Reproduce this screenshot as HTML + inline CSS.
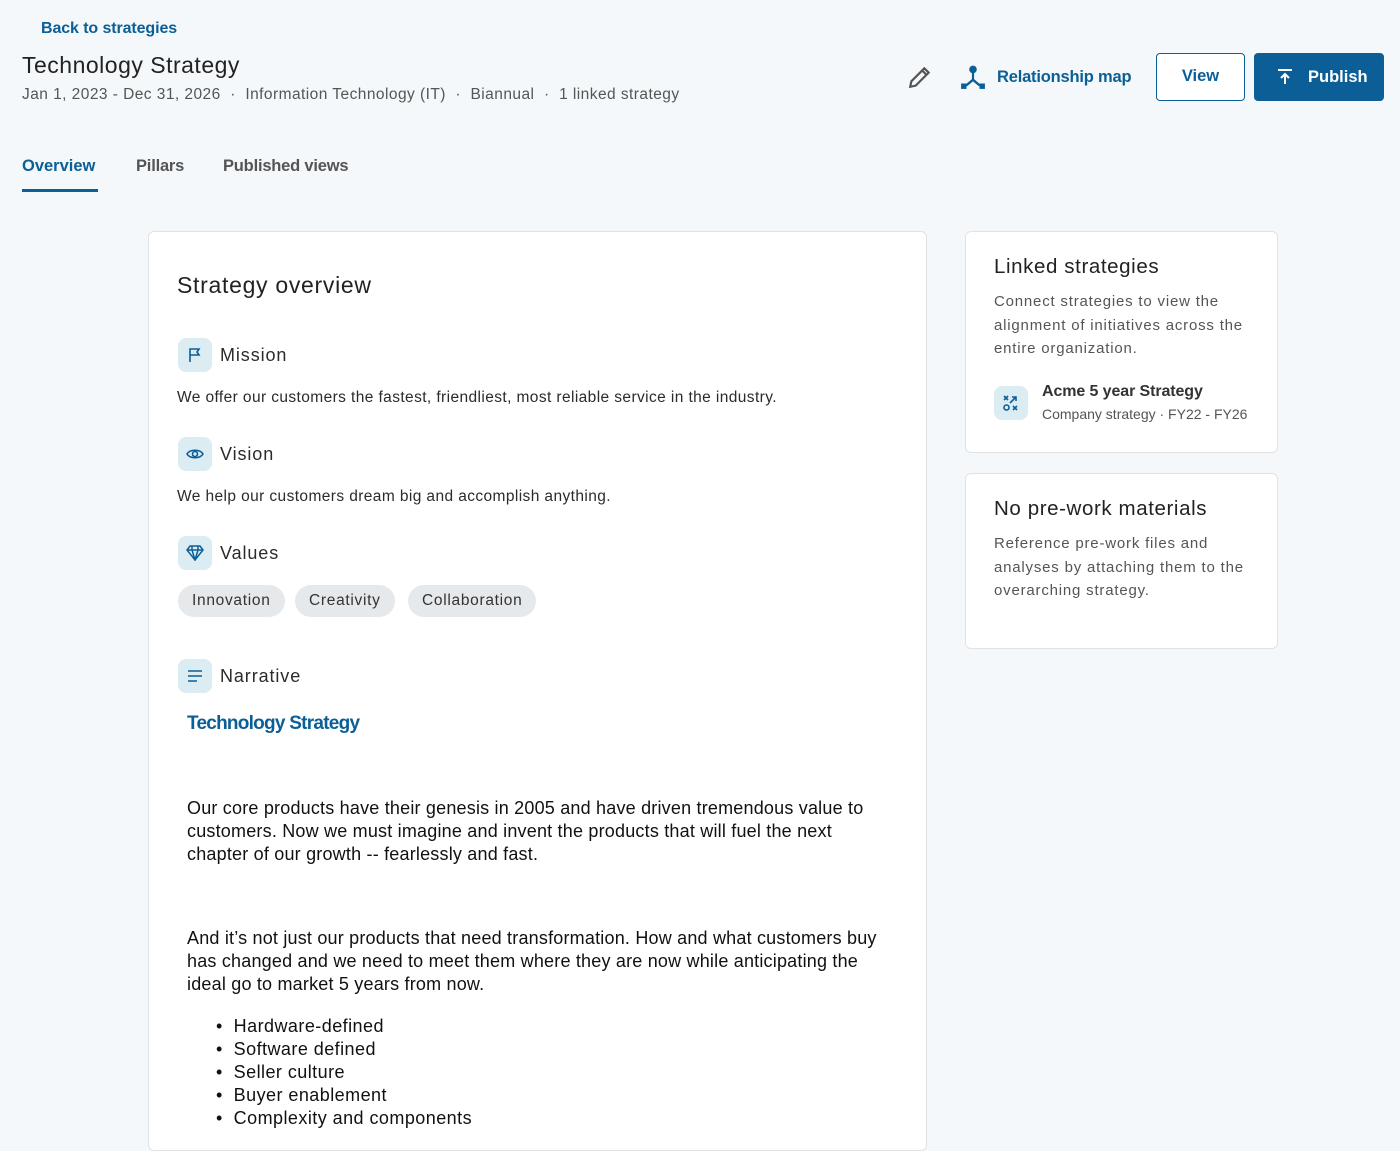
<!DOCTYPE html>
<html><head><meta charset="utf-8"><style>
*{box-sizing:border-box;margin:0;padding:0}
body{width:1400px;height:1120px;overflow:hidden;background:#f4f8fa;font-family:"Liberation Sans",sans-serif;color:#222;position:relative}
.a{position:absolute;white-space:nowrap}
.blue{color:#0b5f96}
.card{position:absolute;background:#fff;border:1px solid #dfe3e6;border-radius:6px}
.ic{position:absolute;width:34px;height:34px;border-radius:8px;background:#dcecf3;display:flex;align-items:center;justify-content:center}
.h{font-size:18px;color:#2b2b2b;letter-spacing:0.9px}
.p{font-size:15.5px;color:#2b2b2b;letter-spacing:0.4px}
.pill{position:absolute;height:32px;border-radius:16px;background:#e6e9ec;font-size:15.5px;color:#333;line-height:32px;padding:0 14px;letter-spacing:0.7px}
.n{font-size:18px;color:#111;letter-spacing:0.2px;line-height:23px}
.g{color:#555;font-size:15px;line-height:23.5px;letter-spacing:0.8px}
</style></head><body>
<div class="a blue" style="left:41px;top:20px;font-size:16px;font-weight:bold;letter-spacing:-0.1px">Back to strategies</div>
<div class="a" style="left:22px;top:52px;font-size:23px;color:#222;letter-spacing:0.5px">Technology Strategy</div>
<div class="a" style="left:22px;top:86px;font-size:15.5px;color:#555;letter-spacing:0.45px">Jan 1, 2023 - Dec 31, 2026 &nbsp;·&nbsp; Information Technology (IT) &nbsp;·&nbsp; Biannual &nbsp;·&nbsp; 1 linked strategy</div>

<svg class="a" style="left:907px;top:64px" width="26" height="26" viewBox="0 0 24 24"><path d="M3 21l1-5L16 4l4 4L8 20z M14 6l4 4" fill="none" stroke="#555" stroke-width="2"/></svg>
<svg class="a" style="left:960px;top:64px" width="26" height="26" viewBox="0 0 24 24" fill="#0b5f96"><circle cx="12" cy="5" r="3.5"/><path d="M11 8h2v6l6 5-1.4 1.6L12 16l-5.6 4.6L5 19l6-5z"/><rect x="1" y="18" width="5" height="5"/><rect x="18" y="18" width="5" height="5"/></svg>
<div class="a blue" style="left:997px;top:68px;font-size:16.5px;font-weight:bold;letter-spacing:-0.2px">Relationship map</div>
<div class="a" style="left:1156px;top:53px;width:89px;height:48px;border:1.5px solid #0b5f96;border-radius:4px;background:#fff;color:#0b5f96;font-weight:bold;font-size:16.5px;text-align:center;line-height:45px">View</div>
<div class="a" style="left:1254px;top:53px;width:130px;height:48px;border-radius:4px;background:#0b5f96;color:#fff;font-weight:bold;font-size:16.5px;line-height:48px;padding-left:54px">Publish</div>
<svg class="a" style="left:1276px;top:68px" width="18" height="18" viewBox="0 0 18 18"><path d="M2 2h14M9 16V6M5 10l4-4 4 4" fill="none" stroke="#fff" stroke-width="2"/></svg>

<div class="a blue" style="left:22px;top:157px;font-size:16.5px;font-weight:bold;letter-spacing:0px">Overview</div>
<div class="a" style="left:22px;top:189px;width:76px;height:3px;background:#0b5f96"></div>
<div class="a" style="left:136px;top:157px;font-size:16.5px;color:#555;font-weight:bold;letter-spacing:-0.2px">Pillars</div>
<div class="a" style="left:223px;top:157px;font-size:16.5px;color:#555;font-weight:bold;letter-spacing:-0.2px">Published views</div>

<div class="card" style="left:148px;top:231px;width:779px;height:920px"></div>
<div class="a" style="left:177px;top:272px;font-size:23px;color:#222;letter-spacing:0.7px">Strategy overview</div>

<div class="ic" style="left:178px;top:338px"><svg width="16" height="16" viewBox="0 0 16 16"><path d="M3 15V2h9l-2 3 2 3H3" fill="none" stroke="#0b5f96" stroke-width="1.6"/></svg></div>
<div class="a h" style="left:220px;top:345px">Mission</div>
<div class="a p" style="left:177px;top:389px">We offer our customers the fastest, friendliest, most reliable service in the industry.</div>

<div class="ic" style="left:178px;top:437px"><svg width="18" height="14" viewBox="0 0 18 14"><path d="M1 7C4 2 14 2 17 7C14 12 4 12 1 7z" fill="none" stroke="#0b5f96" stroke-width="1.6"/><circle cx="9" cy="7" r="2.5" fill="none" stroke="#0b5f96" stroke-width="1.6"/></svg></div>
<div class="a h" style="left:220px;top:444px">Vision</div>
<div class="a p" style="left:177px;top:488px">We help our customers dream big and accomplish anything.</div>

<div class="ic" style="left:178px;top:536px"><svg width="18" height="16" viewBox="0 0 18 16"><path d="M4 1h10l3 4-8 10L1 5z M1 5h16M6 5l3 10 3-10M6 1 6 5M12 1l0 4" fill="none" stroke="#0b5f96" stroke-width="1.5"/></svg></div>
<div class="a h" style="left:220px;top:543px">Values</div>
<div class="pill" style="left:178px;top:585px">Innovation</div>
<div class="pill" style="left:295px;top:585px">Creativity</div>
<div class="pill" style="left:408px;top:585px">Collaboration</div>

<div class="ic" style="left:178px;top:659px"><svg width="16" height="12" viewBox="0 0 16 12"><path d="M1 1h14M1 6h14M1 11h9" stroke="#0b5f96" stroke-width="1.6"/></svg></div>
<div class="a h" style="left:220px;top:666px">Narrative</div>
<div class="a blue" style="left:187px;top:713px;font-size:19px;font-weight:bold;letter-spacing:-0.75px">Technology Strategy</div>

<div class="a n" style="left:187px;top:797px">Our core products have their genesis in 2005 and have driven tremendous value to<br>customers. Now we must imagine and invent the products that will fuel the next<br>chapter of our growth -- fearlessly and fast.</div>
<div class="a n" style="left:187px;top:927px">And it’s not just our products that need transformation. How and what customers buy<br>has changed and we need to meet them where they are now while anticipating the<br>ideal go to market 5 years from now.</div>
<div class="a n" style="left:216px;top:1015px;letter-spacing:0.45px">•&nbsp;&nbsp;Hardware-defined<br>•&nbsp;&nbsp;Software defined<br>•&nbsp;&nbsp;Seller culture<br>•&nbsp;&nbsp;Buyer enablement<br>•&nbsp;&nbsp;Complexity and components</div>

<div class="card" style="left:965px;top:231px;width:313px;height:222px"></div>
<div class="a" style="left:994px;top:255px;font-size:20.5px;color:#222;letter-spacing:0.6px">Linked strategies</div>
<div class="a g" style="left:994px;top:290px">Connect strategies to view the<br>alignment of initiatives across the<br>entire organization.</div>
<div class="ic" style="left:994px;top:386px;width:34px;height:34px"><svg width="18" height="18" viewBox="0 0 18 18" fill="none" stroke="#0b5f96" stroke-width="1.6"><path d="M2 2l4 4M6 2l-4 4M11 12l4 4M15 12l-4 4M10 3h4v4M14 3l-6 6"/><circle cx="4.5" cy="13.5" r="2.5"/></svg></div>
<div class="a" style="left:1042px;top:383px;font-size:16px;font-weight:bold;color:#333;letter-spacing:-0.1px">Acme 5 year Strategy</div>
<div class="a" style="left:1042px;top:406px;font-size:14px;color:#555;letter-spacing:0px">Company strategy · FY22 - FY26</div>

<div class="card" style="left:965px;top:473px;width:313px;height:176px"></div>
<div class="a" style="left:994px;top:497px;font-size:20.5px;color:#222;letter-spacing:0.6px">No pre-work materials</div>
<div class="a g" style="left:994px;top:532px">Reference pre-work files and<br>analyses by attaching them to the<br>overarching strategy.</div>
</body></html>
